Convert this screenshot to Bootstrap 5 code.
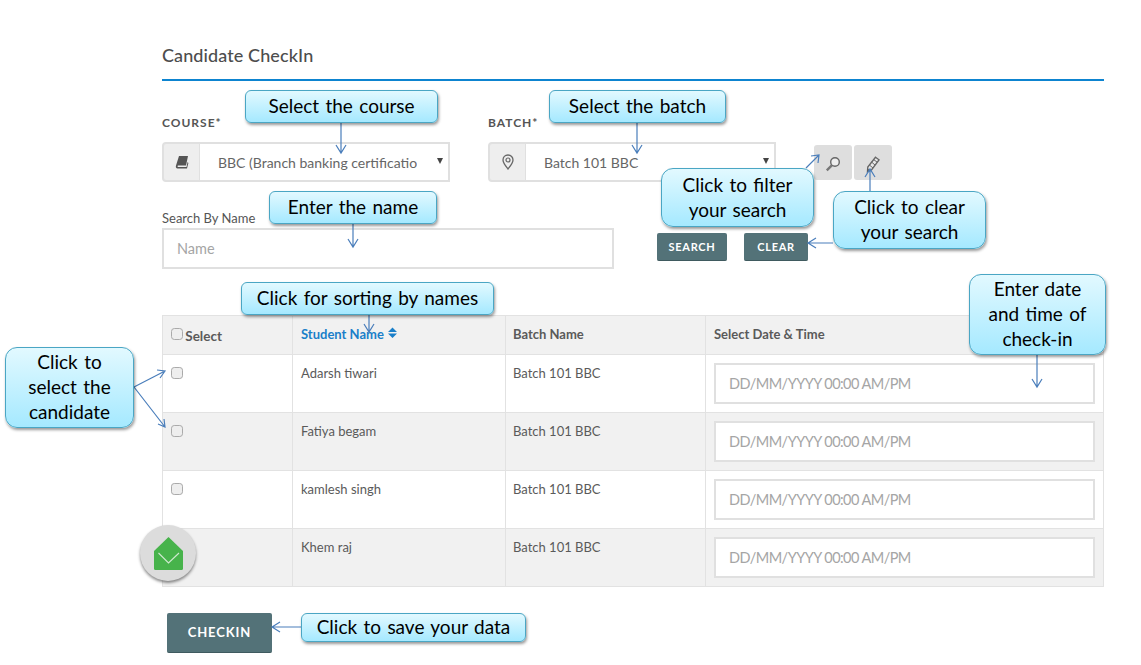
<!DOCTYPE html>
<html lang="en">
  <head>
    <meta charset="UTF-8" />
    <meta name="viewport" content="width=device-width, initial-scale=1.0" />
    <title>Candidate CheckIn</title>
    <link href="https://cdn.jsdelivr.net/npm/bootstrap@5.3.0/dist/css/bootstrap.min.css" rel="stylesheet" />
    <style>
      body {
        font-family: "Lato", sans-serif;
        background-color: #fff;
        color: #555;
        height: 665px;
        overflow: hidden;
        position: relative;
      }
      .page-wrap {
        width: 942px;
        margin-left: 162px;
        padding-top: 44px;
      }
      .page-title {
        font-size: 18px;
        font-weight: 500;
        letter-spacing: 0.1px;
        line-height: 23px;
        color: #4d4d4d;
        padding-bottom: 12px;
        border-bottom: 2px solid #0d84d0;
        margin-bottom: 34px;
      }
      .top-label {
        font-size: 12px;
        font-weight: 700;
        letter-spacing: 1px;
        line-height: 16px;
        color: #555;
        margin-bottom: 11px;
      }
      .pick-wrap {
        width: 288px;
        height: 40px;
        flex-wrap: nowrap;
      }
      .pick-wrap .input-group-text {
        width: 38px;
        justify-content: center;
        padding: 0;
        background: #eee;
        border: 2px solid #e0e0e0;
        border-right-width: 1px;
        border-radius: 4px 0 0 4px;
      }
      .pick-wrap .form-select {
        font-size: 14px;
        color: #666;
        padding: 0 31px 0 18px;
        border: 2px solid #e0e0e0;
        border-left-width: 1px;
        border-radius: 0;
        background-image: none;
        text-overflow: clip;
      }
      .pick-caret {
        position: absolute;
        right: 7px;
        top: 16px;
        z-index: 5;
        border-left: 3.5px solid transparent;
        border-right: 3.5px solid transparent;
        border-top: 6px solid #444;
      }
      .batch-col {
        margin-left: 38px;
      }
      .tool-btn {
        width: 38px;
        height: 35px;
        background: #dedede;
        border-radius: 3px;
        border: 0;
        padding: 0;
      }
      .tool-row {
        margin-left: 38px;
        margin-top: 30px;
        gap: 2px;
      }
      .search-row {
        margin-top: 28px;
      }
      .name-label {
        font-size: 13px;
        line-height: 16px;
        margin-bottom: 2px;
        color: #555;
      }
      .name-input {
        width: 452px;
        height: 41px;
        font-size: 14.5px;
        padding: 0 13px;
        border: 2px solid #e0e0e0;
        border-radius: 0;
      }
      .name-input::placeholder,
      .date-input::placeholder {
        color: #a5a5a5;
      }
      .slate-btn {
        background: #537278;
        color: #fff;
        font-weight: 700;
        font-size: 11px;
        letter-spacing: 0.7px;
        border: 0;
        border-bottom: 1px solid #3f5a5f;
        border-radius: 2px;
        height: 28px;
        padding: 1px 0 0;
      }
      .search-btns {
        margin-left: 43px;
        padding-top: 23px;
      }
      .btn-search { width: 70px; }
      .btn-clear { width: 64px; margin-left: 17px; }
      .cand-table {
        margin-top: 46px;
        margin-bottom: 0;
        border: 1px solid #e2e2e2;
        table-layout: fixed;
        font-size: 13px;
        --bs-table-bg: transparent;
      }
      .cand-table th,
      .cand-table td {
        border: 1px solid #e2e2e2;
        padding: 8px;
        color: #5a5a5a;
        vertical-align: top;
        line-height: 20px;
      }
      .cand-table th {
        background: #f1f1f1;
        height: 39px;
        font-weight: 700;
      }
      .cand-table th.pick-head {
        padding-top: 10px;
        font-size: 13.5px;
      }
      .cand-table td {
        height: 58px;
        font-size: 13px;
      }
      .cand-table .batch-cell {
        padding-left: 7px;
      }
      .cand-table tr.shade-row td {
        background: #f1f1f1;
      }
      .sort-head {
        color: #1a7fc9 !important;
      }
      .sort-head svg {
        vertical-align: 0;
      }
      .cand-check {
        width: 12px;
        height: 12px;
        margin: 4px 0 0;
        background: #eee;
        border: 1px solid #aaa;
        border-radius: 2px;
      }
      .pick-head .cand-check {
        margin-top: 2px;
        margin-right: -1px;
      }
      .date-input {
        height: 41px;
        font-size: 14.5px;
        letter-spacing: -0.55px;
        padding: 0 13px;
        border: 2px solid #e0e0e0;
        border-radius: 0;
      }
      .cand-table td.date-cell {
        padding: 8px 8px 0;
      }
      .checkin-btn {
        width: 105px;
        height: 40px;
        margin: 26px 0 0 5px;
        font-size: 13px;
        letter-spacing: 0.9px;
        display: block;
      }
      .fab-mail {
        position: absolute;
        left: 140px;
        top: 525px;
        width: 56px;
        height: 56px;
        border-radius: 50%;
        background: #dcdcdc;
        box-shadow: 0 2px 3px rgba(0, 0, 0, 0.45);
        display: flex;
        align-items: center;
        justify-content: center;
        z-index: 3;
      }
      .arrow-layer {
        position: absolute;
        left: 0;
        top: 0;
        z-index: 4;
        pointer-events: none;
      }
      .note-box {
        position: absolute;
        z-index: 5;
        display: flex;
        align-items: center;
        justify-content: center;
        text-align: center;
        font-size: 19px;
        line-height: 25px;
        word-spacing: 1.5px;
        padding-bottom: 2px;
        color: #000;
        background: linear-gradient(#e2f9ff, #a5e9ff);
        border: 1px solid #4aa6c4;
        border-radius: 6px;
        box-shadow: 1px 2px 3px rgba(0, 0, 0, 0.4);
      }
      .note-big { border-radius: 12px; }
      #noteCourse { left: 245px; top: 90px; width: 193px; height: 33px; }
      #noteBatch { left: 549px; top: 90px; width: 177px; height: 33px; }
      #noteFilter { left: 661px; top: 168px; width: 153px; height: 59px; }
      #noteClear { left: 833px; top: 191px; width: 153px; height: 58px; }
      #noteName { left: 269px; top: 191px; width: 168px; height: 33px; }
      #noteSort { left: 241px; top: 282px; width: 253px; height: 33px; }
      #noteSelect { left: 5px; top: 347px; width: 129px; height: 81px; }
      #noteDate { left: 969px; top: 274px; width: 137px; height: 81px; }
      #noteSave { left: 301px; top: 613px; width: 225px; height: 29px; }
    </style>
  </head>
  <body>
    <div class="page-wrap">
      <h5 class="page-title">Candidate CheckIn</h5>

      <div class="d-flex">
        <div>
          <div class="top-label">COURSE*</div>
          <div class="input-group pick-wrap position-relative">
            <span class="input-group-text">
              <svg width="14" height="14" viewBox="0 0 14 14"><path d="M4 1h9L11 10.5H3.2C2.4 10.5 2.2 11.9 3.2 11.9H11.5L12.6 7 13.4 8 12 13.4H2.6C1 13.4.5 12 1 10.4Z" fill="#555"/></svg>
            </span>
            <select class="form-select"><option>BBC (Branch banking certification course)</option></select>
            <span class="pick-caret"></span>
          </div>
        </div>
        <div class="batch-col">
          <div class="top-label">BATCH*</div>
          <div class="input-group pick-wrap position-relative">
            <span class="input-group-text">
              <svg width="12" height="16" viewBox="0 0 12 16"><path d="M6 1C3 1 1 3.200 1 6c0 3 3 6.500 5 9 2-2.500 5-6 5-9 0-2.800-2-5-5-5Z" fill="none" stroke="#666" stroke-width="1.300"/><circle cx="6" cy="6" r="2" fill="none" stroke="#666" stroke-width="1.200"/></svg>
            </span>
            <select class="form-select"><option>Batch 101 BBC</option></select>
            <span class="pick-caret"></span>
          </div>
        </div>
        <div class="d-flex tool-row">
          <button class="tool-btn" type="button">
            <svg width="16" height="16" viewBox="0 0 16 16"><circle cx="10" cy="6" r="4.300" fill="#eee" stroke="#666" stroke-width="1.400"/><path d="M7 9.200 1.800 14.400" stroke="#777" stroke-width="2.400"/></svg>
          </button>
          <button class="tool-btn" type="button">
            <svg width="14" height="17" viewBox="0 0 14 17"><path d="M9.500 1.200 13 3.800 5.500 14 1.500 15.800 1.800 11Z" fill="#e8e8e8" stroke="#666" stroke-width="1.400"/><path d="M3.400 9 7 12M5.500 6 9 9M7.500 3.500 11 6" stroke="#666" stroke-width="1"/><path d="M1.800 12.500 4 14.800 1.200 16Z" fill="#555"/></svg>
          </button>
        </div>
      </div>

      <div class="d-flex search-row">
        <div>
          <div class="name-label">Search By Name</div>
          <input class="form-control name-input" type="text" placeholder="Name" />
        </div>
        <div class="search-btns d-flex align-items-start">
          <button class="slate-btn btn-search" type="button">SEARCH</button>
          <button class="slate-btn btn-clear" type="button">CLEAR</button>
        </div>
      </div>

      <table class="table cand-table">
        <colgroup>
          <col style="width: 130px" />
          <col style="width: 213px" />
          <col style="width: 200px" />
          <col />
        </colgroup>
        <thead>
          <tr>
            <th class="pick-head"><input class="form-check-input cand-check" type="checkbox" /> Select</th>
            <th class="sort-head">Student Name<svg class="ms-1" width="9" height="12" viewBox="0 0 9 12"><path d="M4.500 .5 9 5H0ZM0 6.500H9L4.500 11Z" fill="#1a7fc9"/></svg></th>
            <th class="batch-cell">Batch Name</th>
            <th>Select Date &amp; Time</th>
          </tr>
        </thead>
        <tbody id="candRows"></tbody>
      </table>

      <button class="slate-btn checkin-btn" type="button">CHECKIN</button>
    </div>

    <div class="fab-mail">
      <svg width="29" height="33" viewBox="0 0 29 33">
        <path d="M14.500 0 29 14V31.500a1.500 1.500 0 0 1-1.500 1.500H1.500A1.500 1.500 0 0 1 0 31.500V14Z" fill="#47b34b"/>
        <path d="M4.500 16 14.500 26 25 16" fill="none" stroke="#cfe9cf" stroke-width="1.100"/>
      </svg>
    </div>

    <svg class="arrow-layer" width="1141" height="665" fill="none" stroke="#4a7ebb" stroke-width="1.200">
      <path d="M341 123V153M336 145 341 153 346 145" />
      <path d="M637 123V153M632 145 637 153 642 145" />
      <path d="M806 168 819 155M811 156 819 155 818 163" />
      <path d="M870 191V169M865 177 870 169 875 177" />
      <path d="M833 243H808M816 238 808 243 816 248" />
      <path d="M353 224V247M348 239 353 247 358 239" />
      <path d="M369 315V332M364 324 369 332 374 324" />
      <path d="M1037 355V387M1032 379 1037 387 1042 379" />
      <path d="M134 387 165 371M157 370 165 371 160 378" />
      <path d="M134 387 165 427M164 419 165 427 158 424" />
      <path d="M301 627H272M280 622 272 627 280 632" />
    </svg>

    <div class="note-box" id="noteCourse">Select the course</div>
    <div class="note-box" id="noteBatch">Select the batch</div>
    <div class="note-box note-big" id="noteFilter">Click to filter<br />your search</div>
    <div class="note-box note-big" id="noteClear">Click to clear<br />your search</div>
    <div class="note-box" id="noteName">Enter the name</div>
    <div class="note-box" id="noteSort">Click for sorting by names</div>
    <div class="note-box note-big" id="noteSelect">Click to<br />select the<br />candidate</div>
    <div class="note-box note-big" id="noteDate">Enter date<br />and time of<br />check-in</div>
    <div class="note-box" id="noteSave">Click to save your data</div>

    <script>
      const students = ["Adarsh tiwari", "Fatiya begam", "kamlesh singh", "Khem raj"];
      const rows = document.getElementById("candRows");

      students.forEach((name, i) => {
        rows.innerHTML += `
          <tr class="${i % 2 ? "shade-row" : ""}">
            <td><input class="form-check-input cand-check" type="checkbox" /></td>
            <td>${name}</td>
            <td class="batch-cell">Batch 101 BBC</td>
            <td class="date-cell"><input class="form-control date-input" type="text" placeholder="DD/MM/YYYY 00:00 AM/PM" /></td>
          </tr>`;
      });
    </script>
    <script src="https://cdn.jsdelivr.net/npm/bootstrap@5.3.0/dist/js/bootstrap.bundle.min.js"></script>
  </body>
</html>
